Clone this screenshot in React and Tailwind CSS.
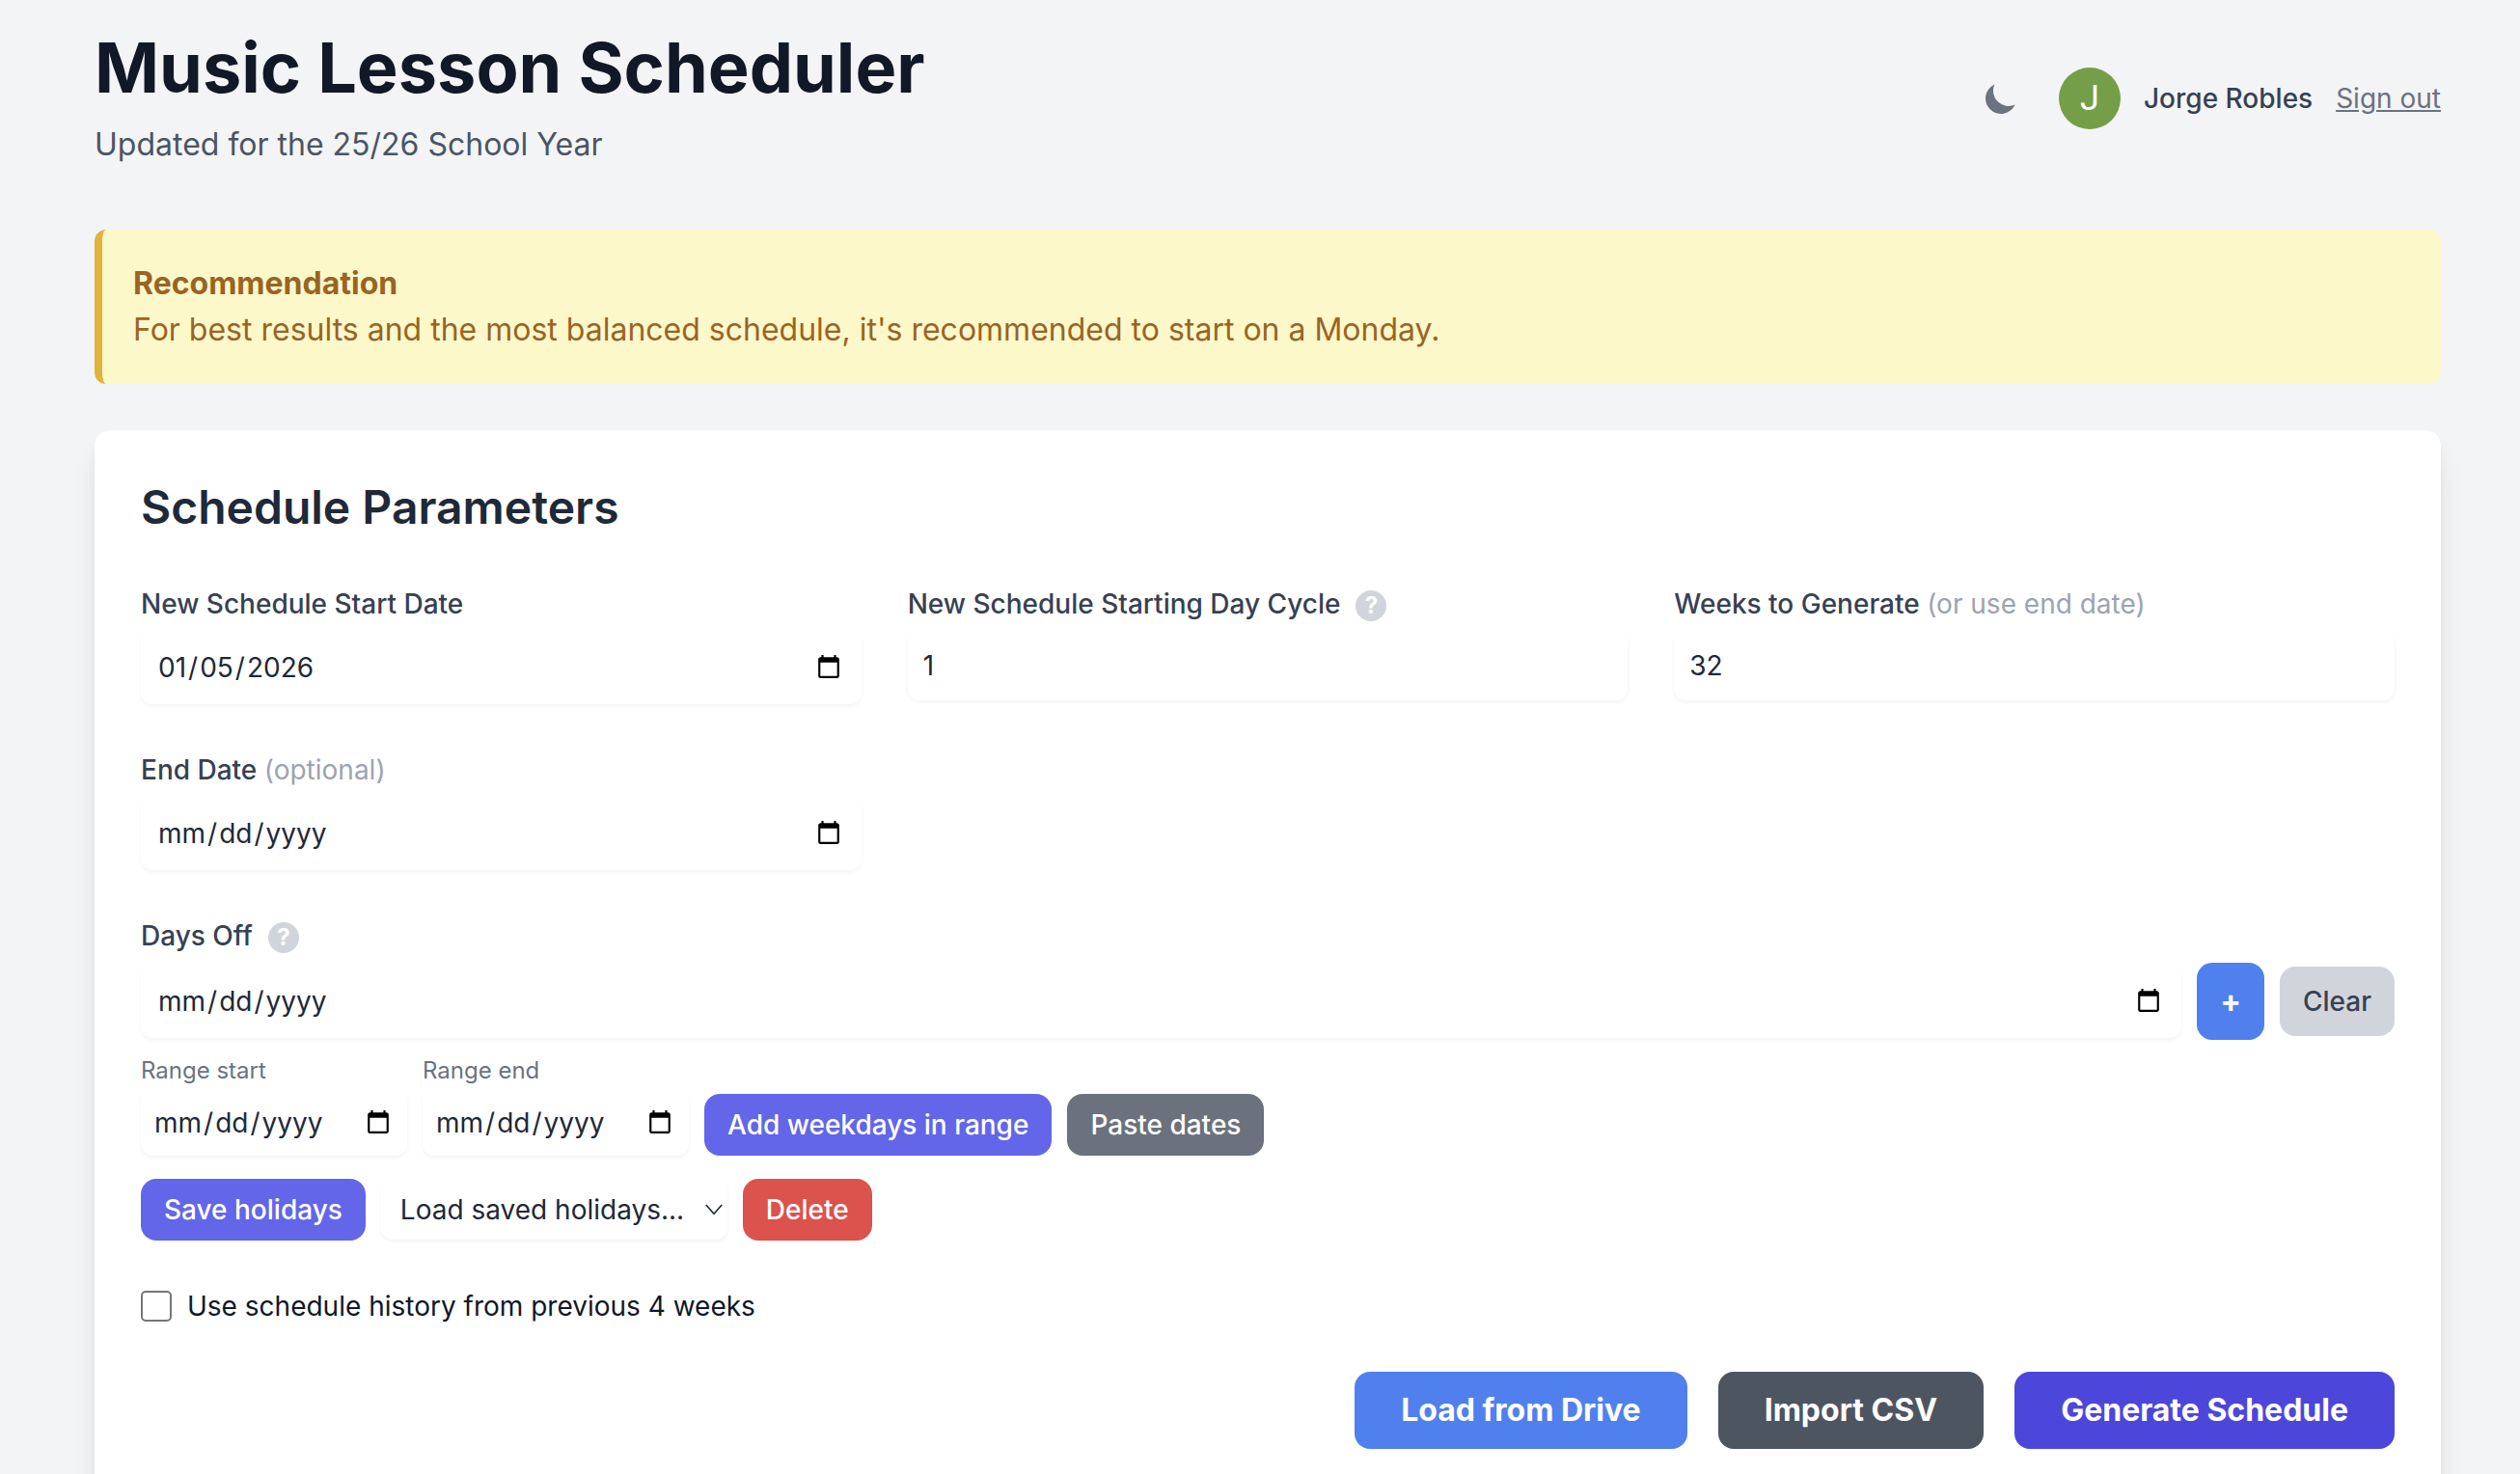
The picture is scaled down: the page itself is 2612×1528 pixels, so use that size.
import { useState } from "react";

const label = "block text-[28px] leading-10 font-medium text-[#374151]";
const field =
  "block w-full rounded-xl bg-white text-[28px] leading-10 text-[#1f2937] shadow-[0_2px_4px_0_rgba(0,0,0,0.05)] outline-none";
const dateParts =
  "[&::-webkit-datetime-edit-month-field]:p-0.5 [&::-webkit-datetime-edit-day-field]:p-0.5 [&::-webkit-datetime-edit-year-field]:p-0.5 [&::-webkit-calendar-picker-indicator]:mr-0.5";
const dateField = `${field} ${dateParts} h-[76px] p-4`;
const rangeField = `${field} ${dateParts} h-[68px] p-3`;
const smallButton =
  "rounded-2xl px-6 py-3 text-[28px] leading-10 font-medium text-white";
const bigButton =
  "rounded-2xl px-12 py-4 text-[32px] leading-[48px] font-bold text-white";

function Help({ text }) {
  return (
    <button
      type="button"
      aria-label={text}
      className="h-8 w-8 shrink-0 rounded-full bg-[#d1d5db] text-center text-2xl leading-8 font-bold text-white"
    >
      ?
    </button>
  );
}

function MoonIcon() {
  return (
    <svg viewBox="0 0 20 20" fill="currentColor" className="h-10 w-10" aria-hidden="true">
      <path d="M17.293 13.293A8 8 0 016.707 2.707a8.001 8.001 0 1010.586 10.586z" />
    </svg>
  );
}

function Header() {
  return (
    <header className="mb-16 flex items-center justify-between">
      <div>
        <h1 className="text-[72px] leading-[80px] font-bold text-[#111827]">
          Music Lesson Scheduler
        </h1>
        <p className="mt-4 text-[32px] leading-[48px] text-[#4b5563]">
          Updated for the 25/26 School Year
        </p>
      </div>
      <div className="flex items-center gap-6 text-[28px] leading-10">
        <button type="button" aria-label="Toggle dark mode" className="rounded-full p-4 text-[#6b7280]">
          <MoonIcon />
        </button>
        <div className="flex h-16 w-16 items-center justify-center rounded-full bg-[#749f48] font-[Roboto,sans-serif] text-4xl text-white">
          J
        </div>
        <span className="font-medium text-[#374151]">Jorge Robles</span>
        <a href="#signout" className="text-[#6b7280] underline">
          Sign out
        </a>
      </div>
    </header>
  );
}

function Notice() {
  return (
    <section className="mb-12 rounded-xl border-l-8 border-[#e2b33c] bg-[#fdf8ca] p-8 text-[32px] leading-[48px] text-[#996424]">
      <h2 className="font-bold">Recommendation</h2>
      <p>For best results and the most balanced schedule, it's recommended to start on a Monday.</p>
    </section>
  );
}

function DaysOff() {
  return (
    <section>
      <div className="flex items-baseline gap-4">
        <label htmlFor="day-off" className={label}>
          Days Off
        </label>
        <Help text="About days off" />
      </div>
      <div className="mt-2 flex items-center gap-4">
        <div className="grow">
          <input id="day-off" type="date" className={dateField} />
        </div>
        <button
          type="button"
          aria-label="Add day off"
          className="rounded-2xl bg-[#4f80ed] px-6 py-4 text-[32px] leading-[48px] font-bold text-white"
        >
          +
        </button>
        <button
          type="button"
          className="rounded-2xl bg-[#d1d5db] px-6 py-4 text-[28px] leading-10 font-medium text-[#374151]"
        >
          Clear
        </button>
      </div>

      <div className="mt-4 flex flex-wrap items-end gap-4">
        <div className="w-[276px]">
          <label htmlFor="range-start" className="mb-1 block text-2xl leading-8 text-[#6b7280]">
            Range start
          </label>
          <input id="range-start" type="date" className={rangeField} />
        </div>
        <div className="w-[276px]">
          <label htmlFor="range-end" className="mb-1 block text-2xl leading-8 text-[#6b7280]">
            Range end
          </label>
          <input id="range-end" type="date" className={rangeField} />
        </div>
        <button type="button" className={`${smallButton} bg-[#6366e8]`}>
          Add weekdays in range
        </button>
        <button type="button" className={`${smallButton} bg-[#6b717d]`}>
          Paste dates
        </button>
      </div>

      <div className="mt-6 flex flex-wrap items-center gap-4">
        <button type="button" className={`${smallButton} bg-[#6366e8]`}>
          Save holidays
        </button>
        <div className="relative">
          <select
            aria-label="Load saved holidays"
            className={`${field} h-[62px] appearance-none pr-11 pl-5`}
          >
            <option>Load saved holidays...</option>
          </select>
          <svg
            viewBox="0 0 20 12"
            fill="none"
            stroke="#1f2937"
            strokeWidth="1.6"
            className="pointer-events-none absolute top-1/2 right-1 h-3 w-5 -translate-y-1/2"
            aria-hidden="true"
          >
            <path d="M1.8 1l8.2 9.2L18.2 1" />
          </svg>
        </div>
        <button type="button" className={`${smallButton} bg-[#dc524c]`}>
          Delete
        </button>
      </div>
    </section>
  );
}

export default function App() {
  const [useHistory, setUseHistory] = useState(false);
  return (
    <div className="h-screen overflow-y-auto bg-[#f3f4f6] pt-[30px] pr-[82px] pb-16 pl-[98px] font-[Inter,sans-serif] [scrollbar-width:none]">
      <Header />
      <Notice />
      <main className="rounded-2xl bg-white p-12 shadow-[0_20px_30px_-6px_rgba(0,0,0,0.1),0_8px_12px_-4px_rgba(0,0,0,0.1)]">
        <h2 className="mb-12 text-5xl leading-[64px] font-semibold text-[#1f2937]">
          Schedule Parameters
        </h2>
        <form className="flex flex-col gap-12" onSubmit={(e) => e.preventDefault()}>
          <div className="grid grid-cols-3 items-start gap-12">
            <div>
              <label htmlFor="start-date" className={`${label} mb-2`}>
                New Schedule Start Date
              </label>
              <input id="start-date" type="date" defaultValue="2026-01-05" className={dateField} />
            </div>
            <div>
              <div className="mb-2 flex items-baseline gap-4">
                <label htmlFor="day-cycle" className={label}>
                  New Schedule Starting Day Cycle
                </label>
                <Help text="About the day cycle" />
              </div>
              <input id="day-cycle" type="number" defaultValue="1" className={`${field} p-4`} />
            </div>
            <div>
              <label htmlFor="weeks" className={`${label} mb-2`}>
                Weeks to Generate{" "}
                <span className="font-normal text-[#9ca3af]">(or use end date)</span>
              </label>
              <input id="weeks" type="number" defaultValue="32" className={`${field} p-4`} />
            </div>
            <div>
              <label htmlFor="end-date" className={`${label} mb-2`}>
                End Date <span className="font-normal text-[#9ca3af]">(optional)</span>
              </label>
              <input id="end-date" type="date" className={dateField} />
            </div>
          </div>

          <DaysOff />

          <label className="flex items-center gap-4 self-start text-[28px] leading-10 text-[#111827]">
            <input
              type="checkbox"
              checked={useHistory}
              onChange={(e) => setUseHistory(e.target.checked)}
              className="h-8 w-8 appearance-none rounded-[5px] border-2 border-[#767676] bg-white checked:bg-[#4c47da]"
            />
            Use schedule history from previous 4 weeks
          </label>

          <div className="flex justify-end gap-8">
            <button type="button" className={`${bigButton} bg-[#4f80ed]`}>
              Load from Drive
            </button>
            <button type="button" className={`${bigButton} bg-[#4d5561]`}>
              Import CSV
            </button>
            <button type="submit" className={`${bigButton} bg-[#4c47da]`}>
              Generate Schedule
            </button>
          </div>
        </form>
      </main>
    </div>
  );
}
